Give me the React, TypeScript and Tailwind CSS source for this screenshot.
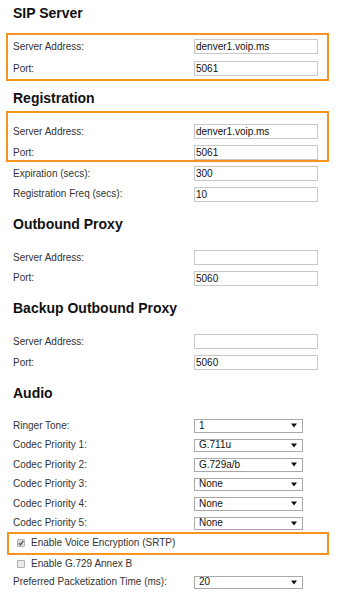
import React from "react";

const Label = ({ children }: { children: React.ReactNode }) => (
  <div className="w-[181px] shrink-0 text-[10px] leading-[12px] text-[#333] whitespace-nowrap">{children}</div>
);

const InputRow = ({ label, value, inBox, mt }: { label: string; value: string; inBox?: boolean; mt: string }) => (
  <div className={`flex items-center h-[15px] ${inBox ? "pl-[5px]" : "pl-[13px]"} ${mt}`}>
    <Label>{label}</Label>
    <div className="w-[124px] h-[15px] border border-[#c8c8c8] bg-white text-[10px] leading-[13px] pl-[1px] text-[#111]">
      {value}
    </div>
  </div>
);

const SelectRow = ({ label, value, mt }: { label: string; value: string; mt: string }) => (
  <div className={`flex items-center h-[13.5px] pl-[13px] ${mt}`}>
    <Label>{label}</Label>
    <div className="w-[109px] h-[13.5px] border border-[#a9a9a9] bg-white flex items-center justify-between pl-[4px] pr-[5px] text-[10px] leading-[12px] text-[#111]">
      <span>{value}</span>
      <svg width="6" height="5" viewBox="0 0 6 5">
        <path d="M0 0.5 L6 0.5 L3 4.5 Z" fill="#111" />
      </svg>
    </div>
  </div>
);

const Heading = ({ children, mt }: { children: React.ReactNode; mt: string }) => (
  <div className={`pl-[13px] text-[14px] leading-[16px] font-bold text-[#111] ${mt}`}>{children}</div>
);

export default function App() {
  return (
    <div className="w-[353px] h-[599px] bg-white overflow-hidden font-['Liberation_Sans',Arial,sans-serif] flex flex-col">
      <Heading mt="mt-[5px]">SIP Server</Heading>
      <div className="ml-[6px] w-[323px] mt-[12px] border-2 border-[#f7941d] pt-[4px] pb-[3px]">
        <InputRow inBox label="Server Address:" value="denver1.voip.ms" mt="" />
        <InputRow inBox label="Port:" value="5061" mt="mt-[7px]" />
      </div>

      <Heading mt="mt-[9px]">Registration</Heading>
      <div className="ml-[6px] w-[323px] mt-[5px] border-2 border-[#f7941d] pt-[11px] pb-[0px]">
        <InputRow inBox label="Server Address:" value="denver1.voip.ms" mt="" />
        <InputRow inBox label="Port:" value="5061" mt="mt-[6px]" />
      </div>
      <InputRow label="Expiration (secs):" value="300" mt="mt-[4px]" />
      <InputRow label="Registration Freq (secs):" value="10" mt="mt-[5.5px]" />

      <Heading mt="mt-[14px]">Outbound Proxy</Heading>
      <InputRow label="Server Address:" value="" mt="mt-[18.5px]" />
      <InputRow label="Port:" value="5060" mt="mt-[5.5px]" />

      <Heading mt="mt-[14.5px]">Backup Outbound Proxy</Heading>
      <InputRow label="Server Address:" value="" mt="mt-[18px]" />
      <InputRow label="Port:" value="5060" mt="mt-[6px]" />

      <Heading mt="mt-[15px]">Audio</Heading>
      <SelectRow label="Ringer Tone:" value="1" mt="mt-[18px]" />
      <SelectRow label="Codec Priority 1:" value="G.711u" mt="mt-[6px]" />
      <SelectRow label="Codec Priority 2:" value="G.729a/b" mt="mt-[6px]" />
      <SelectRow label="Codec Priority 3:" value="None" mt="mt-[6px]" />
      <SelectRow label="Codec Priority 4:" value="None" mt="mt-[6px]" />
      <SelectRow label="Codec Priority 5:" value="None" mt="mt-[6px]" />

      <div className="ml-[7px] w-[322px] mt-[1.5px] h-[23.5px] border-2 border-[#f7941d] flex items-center pl-[8px]">
        <span className="w-[8px] h-[8px] rounded-[1px] border border-[#b5b5b5] bg-[#dcdcdc] flex items-center justify-center">
          <svg width="6" height="6" viewBox="0 0 6 6">
            <path d="M0.8 3.2 L2.4 4.8 L5.3 1" stroke="#555" strokeWidth="1.3" fill="none" />
          </svg>
        </span>
        <span className="ml-[6px] text-[10px] leading-[12px] text-[#333]">Enable Voice Encryption (SRTP)</span>
      </div>
      <div className="flex items-center h-[14px] mt-[1.5px] pl-[17px]">
        <span className="w-[8px] h-[8px] rounded-[1px] border border-[#b0b0b0] bg-[#ececec]" />
        <span className="ml-[6px] text-[10px] leading-[12px] text-[#333]">Enable G.729 Annex B</span>
      </div>
      <SelectRow label="Preferred Packetization Time (ms):" value="20" mt="mt-[5px]" />
    </div>
  );
}
